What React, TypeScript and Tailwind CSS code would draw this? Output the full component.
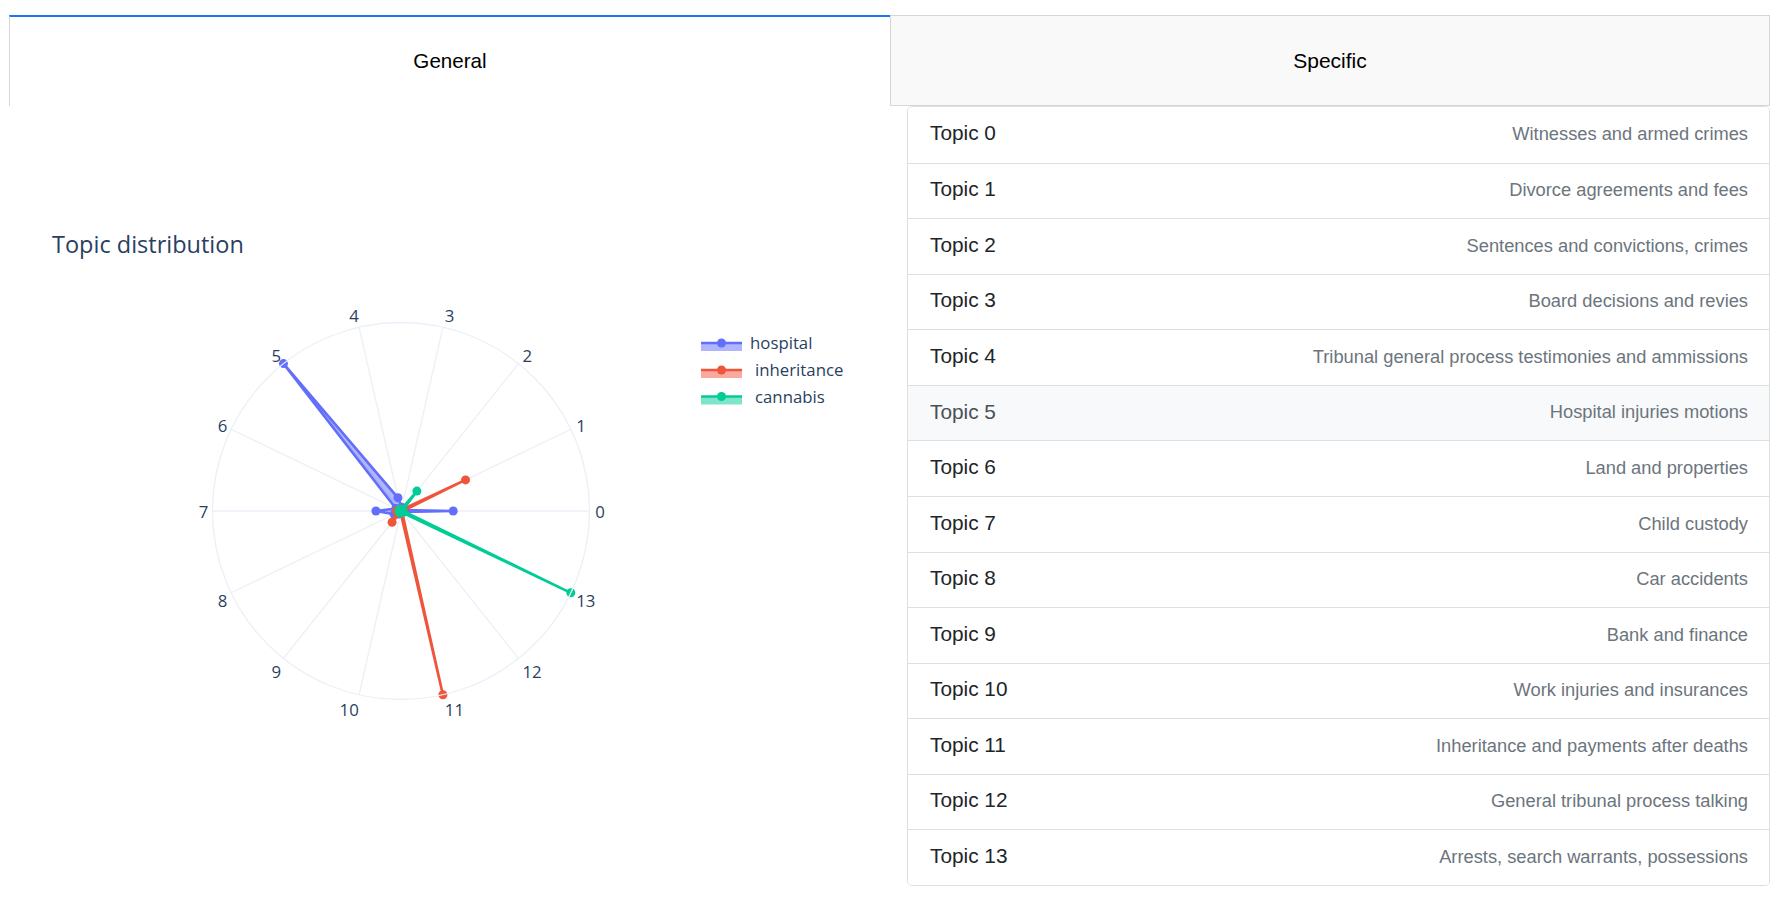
import React from 'react'

const topics = [
  'Witnesses and armed crimes',
  'Divorce agreements and fees',
  'Sentences and convictions, crimes',
  'Board decisions and revies',
  'Tribunal general process testimonies and ammissions',
  'Hospital injuries motions',
  'Land and properties',
  'Child custody',
  'Car accidents',
  'Bank and finance',
  'Work injuries and insurances',
  'Inheritance and payments after deaths',
  'General tribunal process talking',
  'Arrests, search warrants, possessions',
]

const CX = 401
const CY = 511
const R = 188.5
const N = 14

const traces = [
  {
    name: 'hospital',
    color: '#636efa',
    fill: 'rgba(99,110,250,0.5)',
    r: [0.277, 0.012, 0.01, 0.02, 0.072, 1, 0.03, 0.133, 0.04, 0.02, 0.01, 0.01, 0.01, 0.012],
  },
  {
    name: 'inheritance',
    color: '#ef553b',
    fill: 'rgba(239,85,59,0.5)',
    r: [0.01, 0.38, 0.01, 0.01, 0.01, 0.01, 0.01, 0.025, 0.02, 0.076, 0.01, 1, 0.01, 0.01],
  },
  {
    name: 'cannabis',
    color: '#00cc96',
    fill: 'rgba(0,204,150,0.5)',
    r: [0.01, 0.01, 0.135, 0.01, 0.01, 0.01, 0.01, 0.01, 0.01, 0.01, 0.01, 0.01, 0.01, 1],
  },
]

function pt(i: number, r: number) {
  const a = (i * 2 * Math.PI) / N
  return [CX + R * r * Math.cos(a), CY - R * r * Math.sin(a)]
}

function PolarChart() {
  const font = "'Open Sans', 'Noto Sans', sans-serif"
  return (
    <svg width={881} height={780} viewBox="9 106 881 780" style={{ fontFamily: font }}>
      <text x={52} y={253} fontSize={23.5} fill="#2a3f5f">Topic distribution</text>

      {/* spokes */}
      {Array.from({ length: N }).map((_, i) => {
        const [x, y] = pt(i, 1)
        return <line key={i} x1={CX} y1={CY} x2={x} y2={y} stroke="#ebf0f8" strokeWidth={1.3} />
      })}

      {/* traces */}
      {traces.map((t) => {
        const pts = t.r.map((r, i) => pt(i, r))
        const d = 'M' + pts.map((p) => p[0].toFixed(1) + ',' + p[1].toFixed(1)).join('L') + 'Z'
        return (
          <g key={t.name}>
            <path d={d} fill={t.fill} stroke={t.color} strokeWidth={2.6} strokeLinejoin="round" />
            {pts.map((p, i) => (
              <circle key={i} cx={p[0]} cy={p[1]} r={4.5} fill={t.color} />
            ))}
          </g>
        )
      })}

      {/* outer ring drawn above traces */}
      <circle cx={CX} cy={CY} r={R} fill="none" stroke="#ebf0f8" strokeWidth={1.3} />

      {/* angular labels */}
      {Array.from({ length: N }).map((_, i) => {
        const a = (i * 2 * Math.PI) / N
        const c = Math.cos(a)
        const s = Math.sin(a)
        const x = CX + 193.5 * c + 0.8
        const y = CY - 202 * s + 3 * Math.abs(s) + 0.5 - (Math.abs(s) > 0.9 ? 2.3 : 0)
        const anchor = c > 0.01 ? 'start' : c < -0.01 ? 'end' : 'middle'
        return (
          <text key={i} x={x} y={y} fontSize={16.8} fill="#2a3f5f" textAnchor={anchor} dominantBaseline="central">
            {i}
          </text>
        )
      })}

      {/* legend */}
      {traces.map((t, k) => {
        const ly = [343, 370, 396.5][k]
        const tx = k === 0 ? 750 : 755
        return (
          <g key={t.name}>
            <rect x={701} y={ly} width={41} height={8} fill={t.fill} />
            <line x1={701} y1={ly} x2={742} y2={ly} stroke={t.color} strokeWidth={2.6} />
            <circle cx={721.5} cy={ly} r={4.5} fill={t.color} />
            <text x={tx} y={ly + 6} fontSize={16.8} fill="#2a3f5f">{t.name}</text>
          </g>
        )
      })}
    </svg>
  )
}

export default function App() {
  return (
    <div className="w-[1783px] h-[898px] bg-white overflow-hidden font-['Liberation_Sans',Arial,sans-serif]">
      <div className="pt-[15px] pl-[9px]">
        <div className="flex w-[1761px] h-[91px]">
          <div className="w-[881px] border-l border-[#d6d6d6] border-t-2 border-t-[#1975fa] bg-white flex items-center justify-center text-[20.6px] text-black">
            General
          </div>
          <div className="w-[880px] border border-[#d6d6d6] bg-[#f9f9f9] flex items-center justify-center text-[21px] text-black">
            Specific
          </div>
        </div>

        <div className="flex">
          <div className="w-[881px] h-[780px]">
            <PolarChart />
          </div>
          <div className="ml-[17px] w-[863px] h-[780px] border border-[#dfdfdf] rounded-[5px] overflow-hidden">
            {topics.map((desc, i) => (
              <div
                key={i}
                className={`h-[55.57px] pl-[22px] pr-[21px] pb-[2px] flex items-center justify-between ${i > 0 ? 'border-t border-[#dfdfdf]' : ''} ${i === 5 ? 'bg-[#f8f9fa]' : 'bg-white'}`}
              >
                <span className={`text-[20.8px] mb-[2px] ${i === 5 ? 'text-[#495057]' : 'text-[#212529]'}`}>Topic {i}</span>
                <span className="text-[18.3px] text-[#6c757d]">{desc}</span>
              </div>
            ))}
          </div>
        </div>
      </div>
    </div>
  )
}
